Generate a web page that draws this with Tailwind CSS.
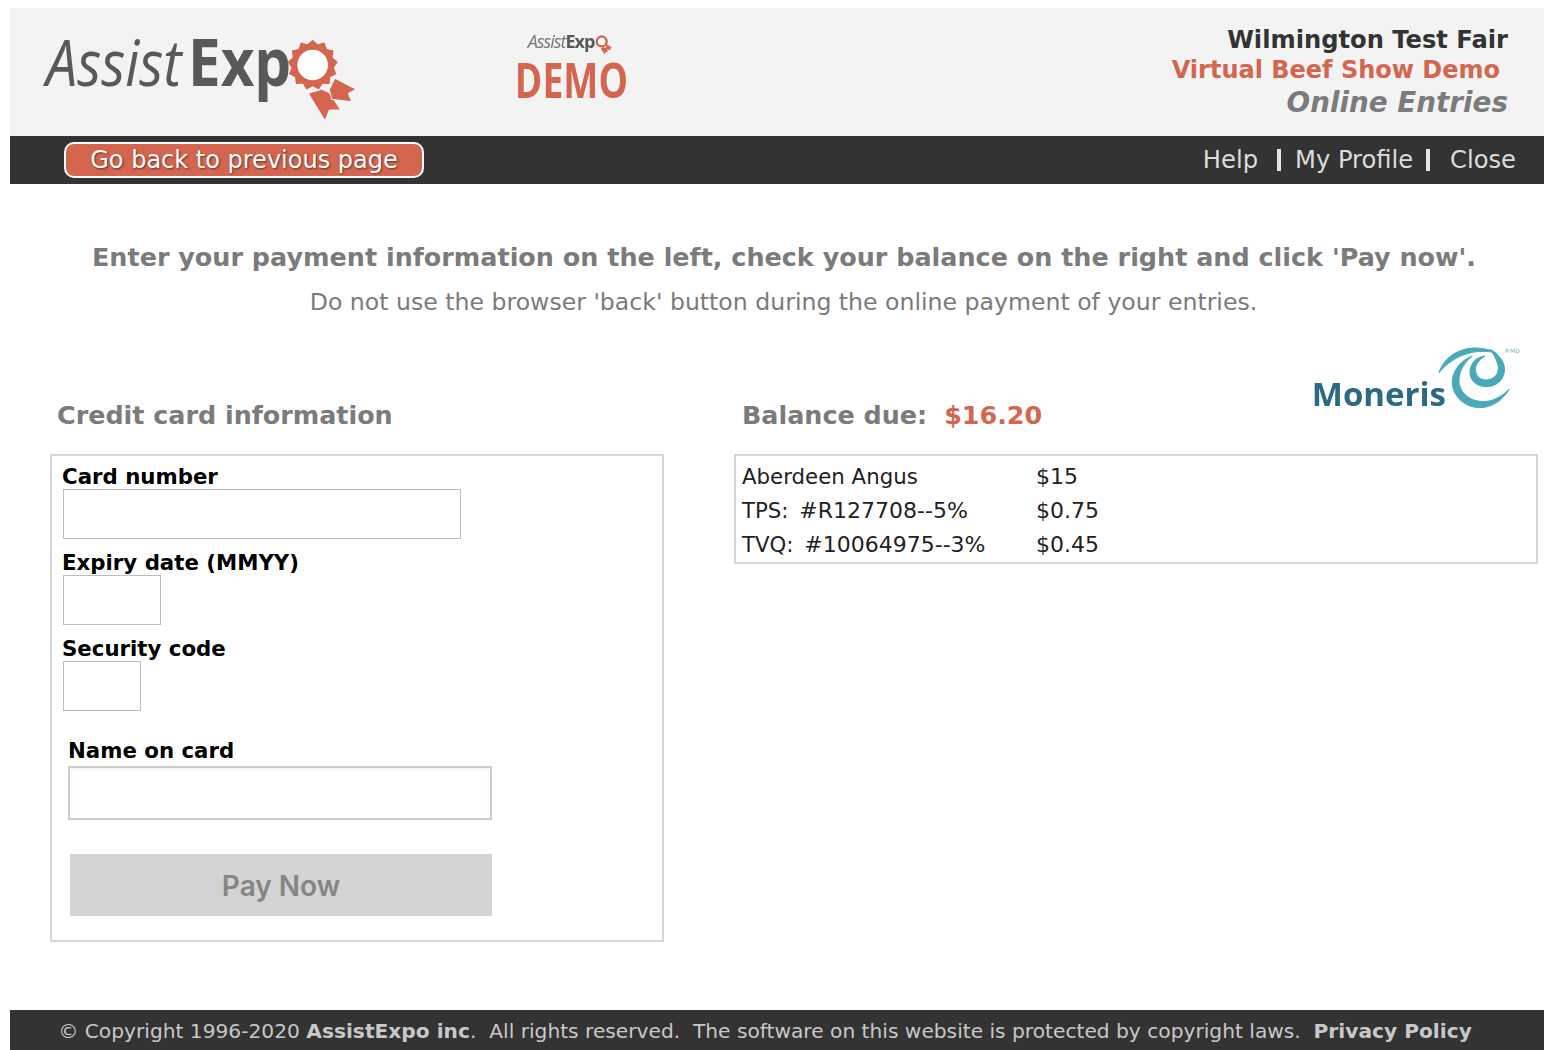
<!DOCTYPE html>
<html lang="en">
<head>
<meta charset="UTF-8">
<title>Online Entries</title>
<script src="https://cdn.jsdelivr.net/npm/@tailwindcss/browser@4"></script>
</head>
<body class="bg-white font-['DejaVu_Sans',Verdana,sans-serif] text-black">
<div class="h-[1050px] overflow-hidden pl-[10px] pr-[2px] pt-[8px] flex flex-col">

  <!-- header -->
  <header class="h-[128px] bg-[#f3f3f3] flex shrink-0">
    <div class="w-[491px] pl-[36px] flex items-start">
      <div class="w-[234px] mt-[19px] flex items-baseline font-['Open_Sans',sans-serif] text-[#58595b] blur-[0.5px]">
        <span class="block w-[142px] shrink-0 origin-left scale-x-[.87] italic font-medium text-[64px] leading-[66px]">Assist</span>
        <span class="block w-[92px] shrink-0 origin-left scale-x-[.87] font-bold text-[67px] leading-[66px]">Exp</span>
      </div>
      <svg class="mt-[22px] blur-[0.5px]" width="85" height="100" viewBox="0 0 255 300">
        <path d="M85 190L135 272 148 240 182 240 148 188 125 178Z" fill="#d4654e" stroke="#f3f3f3" stroke-width="3"/>
        <path d="M165 145L228 178 205 190 215 215 155 208 148 178Z" fill="#d4654e" stroke="#f3f3f3" stroke-width="3"/>
        <polygon points="98,29 113.3,42.9 133.3,37.7 140.4,57.1 160.5,61.8 157.8,82.3 173.5,95.9 161.5,112.7 169.1,132 150.7,141.4 148.4,161.9 127.8,161.6 116.2,178.8 98,169 79.8,178.8 68.2,161.6 47.6,161.9 45.3,141.4 26.9,132 34.5,112.7 22.5,95.9 38.2,82.3 35.5,61.8 55.6,57.1 62.7,37.7 82.7,42.9" fill="#d4654e"/>
        <circle cx="98" cy="105" r="46" fill="#fff"/>
      </svg>
    </div>
    <div class="w-[140px] pt-[21px] flex flex-col items-center">
      <div class="flex items-start h-[25px] font-['Open_Sans',sans-serif] blur-[0.4px]">
        <span class="italic text-[18px] leading-[24px] tracking-[-1px] text-[#77787a]">Assist</span>
        <span class="font-bold text-[18px] leading-[24px] tracking-[-1px] text-[#58595b]">Exp</span>
        <svg class="mt-[4px] w-[20px] h-[24px]" viewBox="0 0 255 300">
          <path d="M85 190L135 272 148 240 182 240 148 188 125 178Z" fill="#d4654e"/>
          <path d="M165 145L228 178 205 190 215 215 155 208 148 178Z" fill="#d4654e"/>
          <circle cx="98" cy="105" r="62" fill="none" stroke="#d4654e" stroke-width="32"/>
          <circle cx="98" cy="105" r="46" fill="#fff"/>
        </svg>
      </div>
      <span class="mt-[5px] block font-['Open_Sans',sans-serif] font-bold text-[49px] leading-[40px] text-[#d4654e] scale-x-[.76] blur-[0.6px]">DEMO</span>
    </div>
    <div class="flex-1 pr-[36px] pt-[16px] text-right">
      <div class="font-bold text-[24.2px] leading-[32px] text-[#333]">Wilmington Test Fair</div>
      <div class="font-bold text-[24px] leading-[28px] text-[#d4654e] pr-[8px]">Virtual Beef Show Demo</div>
      <div class="mt-[2px] font-bold italic text-[27.8px] leading-[34px] text-[#7b7b7b]">Online Entries</div>
    </div>
  </header>

  <!-- nav -->
  <nav class="h-[48px] bg-[#333] flex items-center justify-between pl-[54px] pr-[28px] shrink-0">
    <a class="h-[36px] w-[360px] rounded-[10px] border-2 border-white bg-[#d4654e] text-white text-[24px] leading-[33px] text-center [text-shadow:1px_1px_2px_rgba(0,0,0,0.5)]">Go back to previous page</a>
    <div class="flex items-center text-[24.2px] text-[#dcdcdc]">
      <span>Help</span>
      <span class="ml-[19px] w-[4px] h-[22px] bg-[#e6e6e6]"></span>
      <span class="ml-[14px]">My Profile</span>
      <span class="ml-[13px] w-[4px] h-[22px] bg-[#e6e6e6]"></span>
      <span class="ml-[20px]">Close</span>
    </div>
  </nav>

  <!-- main -->
  <main class="flex-1 flex flex-col">
    <h1 class="mt-[54px] pl-[14px] text-center font-bold text-[25.45px] leading-[38px] text-[#7b7b7b]">Enter your payment information on the left, check your balance on the right and click 'Pay now'.</h1>
    <p class="mt-[7px] pl-[13px] text-center text-[23.6px] leading-[38px] text-[#7b7b7b]">Do not use the browser 'back' button during the online payment of your entries.</p>

    <div class="flex mt-[27px]">
      <!-- card form -->
      <section class="w-[614px] ml-[40px] shrink-0">
        <h2 class="h-[106px] pt-[47px] pl-[7px] font-bold text-[25.4px] leading-[40px] text-[#7b7b7b]">Credit card information</h2>
        <form class="h-[488px] border-2 border-[#d6d6d6] pl-[10px]">
          <label class="block font-bold text-[21.3px] leading-[25px] mt-[8px]">Card number</label>
          <input type="text" class="block w-[398px] h-[50px] ml-[1px] border border-[#bdbdbd] bg-white">
          <label class="block font-bold text-[21.3px] leading-[25px] mt-[11px]">Expiry date (MMYY)</label>
          <input type="text" class="block w-[98px] h-[50px] ml-[1px] border border-[#bdbdbd] bg-white">
          <label class="block font-bold text-[21.3px] leading-[25px] mt-[11px]">Security code</label>
          <input type="text" class="block w-[78px] h-[50px] ml-[1px] border border-[#bdbdbd] bg-white">
          <label class="block font-bold text-[21.3px] leading-[25px] mt-[27px] ml-[6px]">Name on card</label>
          <input type="text" class="block w-[424px] h-[54px] ml-[6px] mt-[3px] border-2 border-[#cdcdcd] bg-white shadow-inner">
          <button type="button" class="block w-[422px] h-[62px] ml-[8px] mt-[34px] pt-[2px] bg-[#d3d3d3] text-[#858585] font-['Inter',sans-serif] font-semibold text-[28px]">Pay Now</button>
        </form>
      </section>

      <!-- balance -->
      <section class="ml-[70px] w-[804px] shrink-0">
        <div class="h-[106px] relative">
          <h2 class="pt-[47px] pl-[8px] font-bold text-[25.4px] leading-[40px] text-[#7b7b7b]">Balance due:<span class="ml-[17px] text-[#d4654e]">$16.20</span></h2>
          <div class="absolute right-[8px] top-[-8px] flex items-start blur-[0.4px]">
            <span class="mt-[37px] font-['Open_Sans',sans-serif] font-bold text-[33px] leading-[34px] text-[#2a6a85]">Moneris</span>
            <div class="relative ml-[-11px] w-[95px] h-[75px]">
              <svg width="95" height="75" viewBox="0 0 285 225">
                <path d="M12 98C25 55 70 22 125 24 150 25 170 30 185 40 160 32 130 32 100 40 65 50 35 70 12 98Z" fill="#4aa9b8" stroke="#4aa9b8" stroke-width="3"/>
                <path d="M112 48C75 62 50 95 52 130 55 175 95 203 135 203 170 203 205 180 222 148 195 175 165 188 135 184 95 180 70 150 72 118 74 90 90 65 112 48Z" fill="#4aa9b8" stroke="#4aa9b8" stroke-width="3"/>
                <path d="M165 28C195 45 212 70 208 95 204 125 178 142 150 140 122 138 102 118 105 92 108 68 125 50 150 48 130 60 118 78 122 95 126 115 145 124 165 118 185 112 195 92 188 72 183 55 175 40 165 28Z" fill="#4aa9b8" stroke="#4aa9b8" stroke-width="3"/>
              </svg>
              <span class="absolute left-[69px] top-[7px] text-[6px] leading-[8px] text-[#6fb5c2]">®MD</span>
            </div>
          </div>
        </div>
        <div class="h-[110px] border-2 border-[#d6d6d6] pt-[4px] text-[21.3px] leading-[34px] text-[#222]">
          <div class="flex"><span class="w-[300px] pl-[6px]">Aberdeen Angus</span><span class="text-[22px]">$15</span></div>
          <div class="flex"><span class="w-[300px] pl-[6px]">TPS: <span class="ml-[4px] text-[22px]">#R127708--5%</span></span><span class="text-[22px]">$0.75</span></div>
          <div class="flex"><span class="w-[300px] pl-[6px]">TVQ: <span class="ml-[4px] text-[22px]">#10064975--3%</span></span><span class="text-[22px]">$0.45</span></div>
        </div>
      </section>
    </div>
  </main>

  <!-- footer -->
  <footer class="h-[40px] bg-[#333] shrink-0 pr-[24px] text-center text-[20.2px] leading-[42px] text-[#c8c8c8] whitespace-pre">© Copyright 1996-2020 <b>AssistExpo inc</b>.  All rights reserved.  The software on this website is protected by copyright laws.  <b>Privacy Policy</b></footer>
</div>
</body>
</html>
